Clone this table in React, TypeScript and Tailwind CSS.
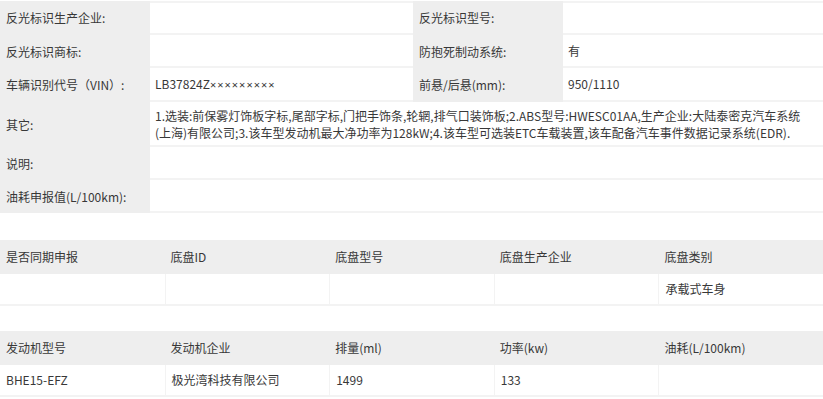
import React from 'react';

const font = { fontFamily: '"Microsoft YaHei", "Noto Sans CJK SC", "Noto Sans", sans-serif' };

type Pair = { label: string; value?: React.ReactNode };

const vin = (
  <span>
    LB37824Z<span style={{ fontFamily: '"Noto Sans", sans-serif' }} className="text-[11px] tracking-[1px]">×××××××××</span>
  </span>
);

const topRows: [Pair, Pair][] = [
  [{ label: '反光标识生产企业:' }, { label: '反光标识型号:' }],
  [{ label: '反光标识商标:' }, { label: '防抱死制动系统:', value: '有' }],
  [{ label: '车辆识别代号（VIN）:', value: vin }, { label: '前悬/后悬(mm):', value: '950/1110' }],
];

const chassisHead = ['是否同期申报', '底盘ID', '底盘型号', '底盘生产企业', '底盘类别'];
const chassisRow = ['', '', '', '', '承载式车身'];

const engineHead = ['发动机型号', '发动机企业', '排量(ml)', '功率(kw)', '油耗(L/100km)'];
const engineRow = ['BHE15-EFZ', '极光湾科技有限公司', '1499', '133', ''];

function Label({ children, className = '' }: { children?: React.ReactNode; className?: string }) {
  return <div className={`bg-[#eeeeee] flex items-center pl-[6px] ${className}`}>{children}</div>;
}

function Value({ children, className = '' }: { children?: React.ReactNode; className?: string }) {
  return <div className={`flex items-center pl-[5px] border-b-2 border-[#f3f3f3] ${className}`}>{children}</div>;
}

function SpecTable({ head, row }: { head: string[]; row: string[] }) {
  return (
    <div>
      <div className="grid grid-cols-5 h-[34px] bg-[#eeeeee]">
        {head.map(h => (
          <div key={h} className="flex items-center pl-[6px]">{h}</div>
        ))}
      </div>
      <div className="grid grid-cols-5 h-[32px] border-b-2 border-[#f3f3f3]">
        {row.map((v, i) => (
          <div key={i} className={`flex items-center pl-[6px] ${i > 0 ? 'border-l border-[#f3f3f3]' : ''}`}>{v}</div>
        ))}
      </div>
    </div>
  );
}

export default function App() {
  return (
    <div className="w-[823px] h-[399px] overflow-hidden bg-white text-[12px] text-[#383838] pt-[1px]" style={font}>
      <div className="grid grid-cols-[150px_263px_150px_1fr]">
        {topRows.map(([a, b], i) => (
          <React.Fragment key={i}>
            <Label className={i === 1 ? 'h-[33px]' : 'h-[34px]'}>{a.label}</Label>
            <Value className={i === 0 ? 'border-t-2' : ''}>{a.value}</Value>
            <Label>{b.label}</Label>
            <Value className={i === 0 ? 'border-t-2' : ''}>{b.value}</Value>
          </React.Fragment>
        ))}
        <Label className="h-[45px]">其它:</Label>
        <Value className="col-span-3 leading-[17px]">
          <div>
            1.选装:前保雾灯饰板字标,尾部字标,门把手饰条,轮辋,排气口装饰板;2.ABS型号:HWESC01AA,生产企业:大陆泰密克汽车系统
            <br />
            (上海)有限公司;3.该车型发动机最大净功率为128kW;4.该车型可选装ETC车载装置,该车配备汽车事件数据记录系统(EDR).
          </div>
        </Value>
        <Label className="h-[33px]">说明:</Label>
        <Value className="col-span-3" />
        <Label className="h-[33px]">油耗申报值(L/100km):</Label>
        <Value className="col-span-3" />
      </div>

      <div className="mt-[27px]">
        <SpecTable head={chassisHead} row={chassisRow} />
      </div>
      <div className="mt-[25px]">
        <SpecTable head={engineHead} row={engineRow} />
      </div>
    </div>
  );
}
